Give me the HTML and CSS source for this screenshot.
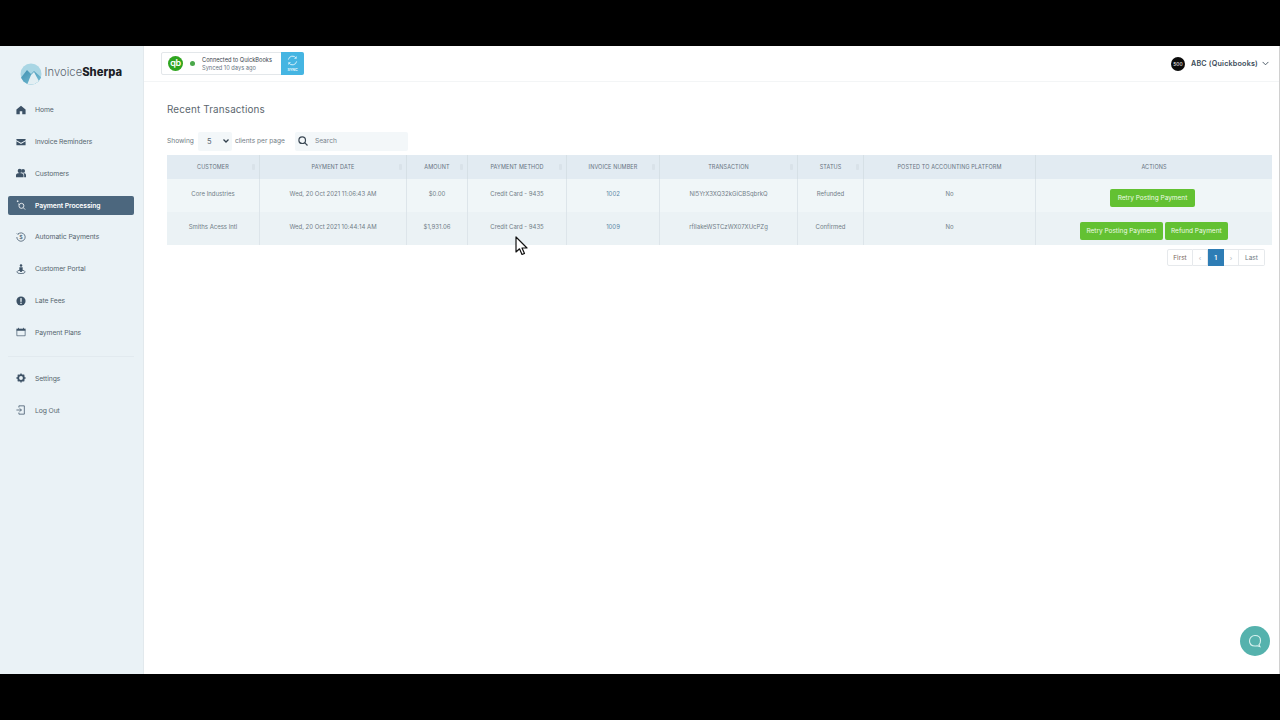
FILE: index.html
```html
<!DOCTYPE html>
<html lang="en">
<head>
<meta charset="utf-8">
<title>Recent Transactions</title>
<link rel="stylesheet" href="styles.css">
</head>
<body>
<div class="letterbox"></div>
<div class="app">
  <aside class="sidebar">
    <div class="logo">
      <svg class="logo-mark" width="22" height="22" viewBox="0 0 22 22"><defs><clipPath id="lc"><circle cx="11" cy="11" r="10.500"/></clipPath><linearGradient id="lg" x1="0" y1="0" x2="1" y2="1"><stop offset="0" stop-color="#3f8fb0"/><stop offset="1" stop-color="#7cc3d8"/></linearGradient></defs><circle cx="11" cy="11" r="10.500" fill="#a9d6e4"/><g clip-path="url(#lc)"><path d="M0 16 L7 7 L11 11 L14 8 L22 15 V22 H0Z" fill="url(#lg)"/><path d="M7 22 L11 12 L14 9 L21 22Z" fill="#e3eff3"/></g></svg>
      <span class="logo-text">Invoice<b>Sherpa</b></span>
    </div>
    <nav class="nav">
      <a class="nav-item"><svg class="ico" viewBox="0 0 12 12"><path d="M6 1 L11.500 5.500 V11 H7.500 V7.500 H4.500 V11 H.500 V5.500Z" fill="#3d5266"/></svg>Home</a>
      <a class="nav-item"><svg class="ico" viewBox="0 0 12 12"><path d="M.5 2.500h11v1.400L6 7 .5 3.900zM.5 5.200 6 8.300l5.500-3.100V10h-11z" fill="#3d5266"/></svg>Invoice Reminders</a>
      <a class="nav-item"><svg class="ico" viewBox="0 0 12 12"><circle cx="4.500" cy="3.500" r="2.500" fill="#3d5266"/><circle cx="8.500" cy="3.500" r="2.300" fill="#3d5266"/><path d="M0 11V8.500C0 7 2 6 4.500 6S9 7 9 8.500V11zM9.800 11V8.300C9.800 7.300 9.300 6.600 8.700 6.100 10.500 6 12 7 12 8.500V11z" fill="#3d5266"/></svg>Customers</a>
      <a class="nav-item active"><svg class="ico" viewBox="0 0 12 12" fill="none" stroke="#fff"><circle cx="6.500" cy="7" r="3"/><path d="M9 9.500l2 2M1 1.500h2M2 .5v2M2.500 4.500l1.500 1" stroke-width=".9"/></svg>Payment Processing</a>
      <a class="nav-item"><svg class="ico" viewBox="0 0 12 12" fill="none" stroke="#3d5266"><path d="M2.500 2.500A5 5 0 1 1 1 6" stroke-width=".9"/><path d="M.8 1.500l1.500 1.500 1-1.500" stroke-width=".7"/><text x="6" y="8.500" class="ico-dollar">$</text></svg>Automatic Payments</a>
      <a class="nav-item"><svg class="ico" viewBox="0 0 12 12"><circle cx="6" cy="1.800" r="1.500" fill="#3d5266"/><path d="M4 3.800h4V8H7v1.500H5V8H4z" fill="#3d5266"/><ellipse cx="6" cy="9.500" rx="5" ry="2" fill="none" stroke="#3d5266" stroke-width=".9"/></svg>Customer Portal</a>
      <a class="nav-item"><svg class="ico" viewBox="0 0 12 12"><circle cx="6" cy="6" r="5.500" fill="#3d5266"/><rect x="5.200" y="2.500" width="1.600" height="4.500" fill="#eaf2f6"/><rect x="5.200" y="8" width="1.600" height="1.600" fill="#eaf2f6"/></svg>Late Fees</a>
      <a class="nav-item"><svg class="ico" viewBox="0 0 12 12"><path d="M.5 2h11v2.500H.500z" fill="#3d5266"/><path d="M1 4v6.500h10V4" fill="none" stroke="#3d5266" stroke-width=".8"/><path d="M3 1v1.500M9 1v1.500" stroke="#3d5266"/></svg>Payment Plans</a>
      <div class="nav-divider"></div>
      <a class="nav-item"><svg class="ico" viewBox="0 0 12 12"><circle cx="6" cy="6" r="3.400" fill="none" stroke="#3d5266" stroke-width="2.200"/><path d="M6 .5V11.500M.5 6H11.500M2.100 2.100l7.800 7.800M9.900 2.100l-7.800 7.800" stroke="#3d5266" stroke-width="1.600" stroke-dasharray="1.800 7.500"/></svg>Settings</a>
      <a class="nav-item"><svg class="ico" viewBox="0 0 12 12" fill="none" stroke="#3d5266" stroke-width=".9"><path d="M3.500 3V1h6.500v10H3.500V9M.5 6H6.500M4.500 4l2 2-2 2"/></svg>Log Out</a>
    </nav>
  </aside>
  <main class="main">
    <header class="topbar">
      <div class="qb">
        <span class="qb-badge">qb</span>
        <span class="qb-dot"></span>
        <div class="qb-text"><div class="qb-title">Connected to QuickBooks</div><div class="qb-sub">Synced 10 days ago</div></div>
        <div class="qb-sync"><svg width="11" height="11" viewBox="0 0 12 12" fill="none" stroke="#dff3fb"><path d="M1.500 5A4.600 4.600 0 0 1 10 3.500M10.500 7A4.600 4.600 0 0 1 2 8.500"/><path d="M10.200 1.500v2.200H8M1.800 10.500V8.300H4" stroke-width=".8"/></svg><span>SYNC</span></div>
      </div>
      <div class="user"><span class="user-badge">500</span><span class="user-name">ABC (Quickbooks)</span><svg width="7" height="5" viewBox="0 0 8 5" fill="none" stroke="#3a4a58"><path d="M.7.700 4 4 7.300.700"/></svg></div>
    </header>
    <section class="content">
      <h1 class="title">Recent Transactions</h1>
      <div class="filters">
        <span class="label">Showing</span>
        <div class="select"><span>5</span><svg width="6" height="4" viewBox="0 0 6 4" fill="none" stroke="#33414e" stroke-width="1.300"><path d="M.5.500 3 3 5.500.500"/></svg></div>
        <span class="label">clients per page</span>
        <div class="search"><svg width="10" height="10" viewBox="0 0 10 10" fill="none" stroke="#3b4854" stroke-width="1.200"><circle cx="4.200" cy="4.200" r="3.300"/><path d="M6.700 6.700 9.500 9.500"/></svg><span>Search</span></div>
      </div>
      <table class="tx">
        <colgroup><col class="c1"><col class="c2"><col class="c3"><col class="c4"><col class="c5"><col class="c6"><col class="c7"><col class="c8"><col class="c9"></colgroup>
        <thead><tr>
          <th class="sort">CUSTOMER</th><th class="sort">PAYMENT DATE</th><th class="sort">AMOUNT</th><th class="sort">PAYMENT METHOD</th><th class="sort">INVOICE NUMBER</th><th class="sort">TRANSACTION</th><th class="sort">STATUS</th><th>POSTED TO ACCOUNTING PLATFORM</th><th>ACTIONS</th>
        </tr></thead>
        <tbody>
          <tr class="odd"><td>Core Industries</td><td>Wed, 20 Oct 2021 11:06:43 AM</td><td>$0.00</td><td>Credit Card - 9435</td><td class="link">1002</td><td>NI5YrX3XQ32kGiCBSqbrkQ</td><td>Refunded</td><td>No</td><td class="acts"><a class="btn">Retry Posting Payment</a></td></tr>
          <tr class="even"><td>Smiths Acess Intl</td><td>Wed, 20 Oct 2021 10:44:14 AM</td><td>$1,931.06</td><td>Credit Card - 9435</td><td class="link">1009</td><td>rfIlakeWSTCzWX07XUcPZg</td><td>Confirmed</td><td>No</td><td class="acts"><a class="btn">Retry Posting Payment</a><a class="btn">Refund Payment</a></td></tr>
        </tbody>
      </table>
      <div class="pager"><a class="pg pg-first">First</a><a class="pg pg-arrow">‹</a><a class="pg pg-on">1</a><a class="pg pg-arrow">›</a><a class="pg pg-last">Last</a></div>
    </section>
  </main>
  <svg class="cursor" width="14" height="20" viewBox="0 0 14 20"><path d="M1 1V16L4.500 12.800 7 18.500 9.500 17.400 7 12H12Z" fill="#fff" stroke="#111" stroke-width="1.200" stroke-linejoin="round"/></svg>
  <div class="chat"><svg width="14" height="14" viewBox="0 0 14 14" fill="none" stroke="#d8f2ef" stroke-width="1.100"><path d="M7 1.500c3.200 0 5.500 1.900 5.500 5s-1.500 4.300-1.500 4.300l.9 1.700-2.700-.8c-.7.200-1.400.3-2.200.3-3.200 0-5.500-2-5.500-5s2.300-5.500 5.500-5.500z"/></svg></div>
</div>
<div class="letterbox"></div>
</body>
</html>
```
FILE: styles.css
```css
* { box-sizing: border-box; }
html, body { margin: 0; padding: 0; height: 720px; overflow: hidden; }
body { display: flex; flex-direction: column; background: #000; font-family: "Inter", "Liberation Sans", sans-serif; color: #54636f; }
.letterbox { height: 46px; background: #000; flex: none; }
.app { position: relative; flex: none; height: 628px; display: flex; background: #fff; }

.sidebar { width: 144px; flex: none; background: #eaf2f6; border-right: 1px solid #e2e9ed; }
.logo { height: 52px; padding: 17px 0 0 19.500px; display: flex; align-items: flex-start; gap: 3px; }
.logo-mark { flex: none; }
.logo-text { font-size: 11.200px; line-height: 18px; font-weight: 300; color: #5b6670; letter-spacing: .05px; }
.logo-text b { font-weight: 800; color: #1b2126; }
.nav { padding: 0 9px 0 8px; margin-top: 2.300px; display: flex; flex-direction: column; }
.nav-item { height: 19px; margin-bottom: 12.800px; display: flex; align-items: center; gap: 9px; padding-left: 8px; font-size: 6.800px; color: #56666f; border-radius: 2px; white-space: nowrap; letter-spacing: -.1px; }
.nav-item.active { background: #4c677e; color: #fff; font-weight: 600; }
.ico { width: 10px; height: 10px; flex: none; overflow: visible; }
.ico-dollar { font-size: 6.500px; text-anchor: middle; fill: #3d5266; stroke: none; }
.nav-divider { height: 1px; background: #e2eaef; margin: 1px 0 12.300px; }

.main { flex: 1; min-width: 0; display: flex; flex-direction: column; border-right: 1px solid #d0d0d0; }
.topbar { height: 36px; flex: none; display: flex; justify-content: space-between; align-items: flex-start; padding: 6px 10px 0 17px; border-bottom: 1px solid #f3f5f6; }
.qb { display: flex; align-items: center; height: 23px; width: 143px; border: 1px solid #e3e7ea; border-radius: 2px; background: #fff; }
.qb-badge { width: 15px; height: 15px; margin-left: 6px; border-radius: 50%; background: #2fa51f; color: #fff; font-size: 9px; line-height: 14px; text-align: center; font-weight: 600; flex: none; letter-spacing: -.3px; }
.qb-dot { width: 5px; height: 5px; border-radius: 50%; background: #4aa84a; margin-left: 7px; flex: none; }
.qb-text { margin-left: 7px; flex: 1; font-size: 5.700px; line-height: 7.500px; white-space: nowrap; }
.qb-title { color: #39434c; }
.qb-sub { color: #69757f; }
.qb-sync { width: 23px; height: 23px; margin: -1px -1px -1px 0; background: #45b5e2; border-radius: 0 2px 2px 0; display: flex; flex-direction: column; align-items: center; justify-content: center; color: #e6f7fd; font-size: 3.500px; font-weight: 700; gap: 2px; flex: none; }
.user { display: flex; align-items: center; height: 23px; font-size: 7.200px; font-weight: 600; color: #3a4a58; letter-spacing: .2px; }
.user-badge { width: 14px; height: 14px; border-radius: 50%; background: #0b0b0b; color: #fff; font-size: 5px; line-height: 14px; text-align: center; margin-right: 6px; font-weight: 400; letter-spacing: 0; }
.user-name { margin-right: 4px; }

.content { padding: 0 7px 0 23px; }
.title { margin: 19.500px 0 0; font-size: 9.900px; line-height: 14px; font-weight: 400; color: #5c676f; letter-spacing: .15px; }
.filters { display: flex; align-items: center; margin-top: 15.500px; height: 20px; font-size: 6.600px; }
.label { color: #717c85; }
.select { width: 34px; height: 19px; margin: 0 3px 0 4px; background: #f3f7f9; border-radius: 2px; display: flex; align-items: center; justify-content: space-between; padding: 0 3px 0 9px; color: #5a6873; font-size: 7.500px; }
.search { width: 113px; height: 19px; margin-left: 10px; background: #f3f7f9; border-radius: 2px; display: flex; align-items: center; gap: 7px; padding-left: 3px; color: #79848d; }
.tx { margin-top: 4px; width: 1105px; table-layout: fixed; border-collapse: separate; border-spacing: 0; font-size: 6px; }
.c1 { width: 93px; } .c2 { width: 147px; } .c3 { width: 61px; } .c4 { width: 99px; } .c5 { width: 93px; } .c6 { width: 138px; } .c7 { width: 66px; } .c8 { width: 172px; } .c9 { width: 236px; }
.tx th { position: relative; height: 24px; background: #e2ebf2; font-weight: 400; font-size: 5.500px; color: #66727f; letter-spacing: .1px; text-align: center; border-right: 1px solid #d6e0e6; padding: 0 0 1px; white-space: nowrap; }
.tx th:last-child, .tx td:last-child { border-right: 0; }
.tx th.sort::after { content: ""; position: absolute; right: 4px; top: 9px; width: 3px; height: 6px; background: #d9e2e9; border-radius: 1px; }
.tx td { text-align: center; vertical-align: top; padding: 11px 0 0; color: #717d87; border-right: 1px solid #dde5ea; white-space: nowrap; }
.odd td { height: 33px; background: #f0f6f8; }
.even td { height: 33px; background: #ebf2f5; }
.tx td.link { color: #5a87a6; }
.tx td.acts { padding: 10px 0 0; font-size: 0; }
.btn { display: inline-block; height: 18px; line-height: 18px; padding: 0 6.500px; margin: 0 1px; background: #63c132; color: #eefbe6; font-size: 6.500px; border-radius: 2px; }
.odd .btn { padding: 0 7.500px; margin-right: 4px; }
.pager { display: flex; justify-content: flex-end; margin: 4px 7px 0 0; height: 17px; font-size: 6.500px; color: #7c6a60; }
.pg { display: flex; align-items: center; justify-content: center; height: 17px; border: 1px solid #e6e9ec; border-left: 0; background: #fff; }
.pg-first { width: 26px; border-left: 1px solid #e6e9ec; border-radius: 2px 0 0 2px; }
.pg-arrow { width: 15px; color: #aeb6bc; }
.pg-on { width: 16px; background: #2e7db5; border-color: #2e7db5; color: #fff; font-weight: 600; }
.pg-last { width: 26px; color: #6e7a84; border-radius: 0 2px 2px 0; }

.cursor { position: absolute; left: 515px; top: 190px; }
.chat { position: absolute; left: 1240px; top: 580px; width: 30px; height: 30px; border-radius: 50%; background: #55b2ad; display: flex; align-items: center; justify-content: center; }
```
